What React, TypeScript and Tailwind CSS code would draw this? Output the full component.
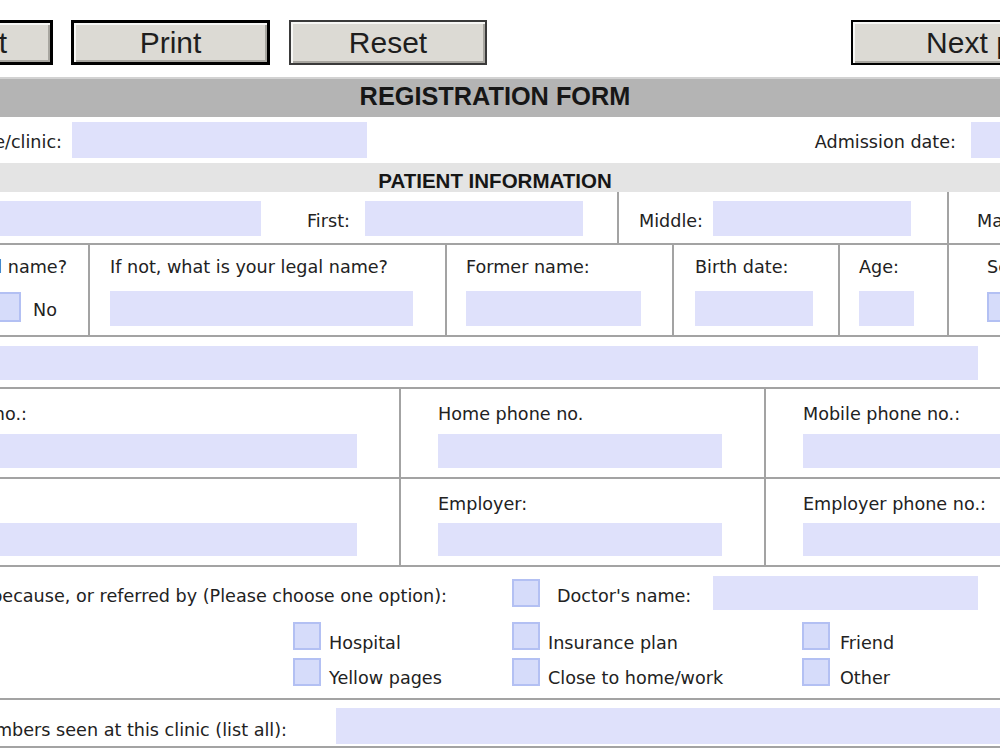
import type { ReactNode } from "react";

const line = "border-[#a3a3a3]";

function Field({ className = "" }: { className?: string }) {
    return <div className={`bg-[#dfe1fb] shrink-0 ${className}`} />;
}

function Box({ className = "" }: { className?: string }) {
    return <div className={`w-[28px] h-[28px] shrink-0 bg-[#d6dcfa] border-2 border-[#b3c0f3] ${className}`} />;
}

// label whose start is cut off by the left edge of the view
function Tail({ w, children, className = "" }: { w: string; children: ReactNode; className?: string }) {
    return <div className={`flex justify-end whitespace-nowrap shrink-0 ${w} ${className}`}>{children}</div>;
}

function Btn({ children, className = "" }: { children: ReactNode; className?: string }) {
    return (
        <button className={`h-[45px] shrink-0 bg-[#dcdad4] shadow-[inset_2px_2px_0_#f7f7f5,inset_-2px_-2px_0_#a8a6a0] text-[30px] leading-none text-[#1e1e1e] font-['Liberation_Sans',sans-serif] ${className}`}>
            {children}
        </button>
    );
}

export default function App() {
    return (
        <div className="w-[1000px] h-[750px] overflow-hidden bg-white text-[#222] font-['DejaVu_Sans',sans-serif] text-[17.6px] leading-[22px]">
            {/* action buttons */}
            <div className="flex pt-[20px] h-[77px]">
                <div className="flex justify-end w-[53px] shrink-0">
                    <Btn className="w-[199px] pl-[14px] border-[3px] border-black">Submit</Btn>
                </div>
                <Btn className="ml-[18px] w-[199px] border-[3px] border-black">Print</Btn>
                <Btn className="ml-[19px] w-[198px] border-2 border-[#3a3a3a]">Reset</Btn>
                <Btn className="ml-[364px] w-[287px] border-2 border-black">Next page</Btn>
            </div>

            <div className="h-[40px] bg-[#b4b4b4] border-t-2 border-[#d2d2d2] flex items-center pb-[5px]">
                <div className="w-[990px] text-center font-['Liberation_Sans',sans-serif] font-bold text-[25.3px] leading-[28px] text-[#161616]">REGISTRATION FORM</div>
            </div>

            <div className="h-[46px] flex items-center">
                <Tail w="w-[62px]" className="mt-[4px]">Name of practice/clinic:</Tail>
                <Field className="ml-[10px] w-[295px] h-[36px]" />
                <Tail w="w-[589px]" className="mt-[4px]">Admission date:</Tail>
                <Field className="ml-[15px] w-[60px] h-[36px]" />
            </div>

            <div className="h-[29px] bg-[#e4e4e4] flex items-end">
                <div className="w-[990px] text-center font-['Liberation_Sans',sans-serif] font-bold text-[20.5px] leading-[22px] text-[#161616]">PATIENT INFORMATION</div>
            </div>

            {/* name */}
            <div className={`flex h-[53px] border-b-2 ${line}`}>
                <div className={`w-[619px] shrink-0 border-r-2 ${line} flex items-center`}>
                    <Field className="w-[261px] h-[35px] mt-[2px]" />
                    <div className="ml-[46px] w-[58px] shrink-0 mt-[6px]">First:</div>
                    <Field className="w-[218px] h-[35px] mt-[2px]" />
                </div>
                <div className={`w-[330px] shrink-0 border-r-2 ${line} flex items-center pl-[20px]`}>
                    <div className="w-[74px] shrink-0 mt-[6px]">Middle:</div>
                    <Field className="w-[198px] h-[35px] mt-[2px]" />
                </div>
                <div className="flex items-center pl-[28px] whitespace-nowrap mt-[6px]">Maiden:</div>
            </div>

            <div className={`flex h-[92px] border-b-2 ${line}`}>
                <div className={`w-[90px] shrink-0 border-r-2 ${line} pt-[11px]`}>
                    <Tail w="w-[67px]">Is this your legal name?</Tail>
                    <div className="flex justify-end items-center w-[57px] mt-[14px] whitespace-nowrap">
                        <Box className="h-[30px] w-[30px]" />
                        <span className="ml-[12px] mr-[16px] mt-[5px]">Yes</span>
                        <Box className="h-[30px] w-[30px]" />
                        <span className="ml-[12px] mt-[5px]">No</span>
                    </div>
                </div>
                <div className={`w-[357px] shrink-0 border-r-2 ${line} pl-[20px] pt-[11px]`}>
                    <div className="whitespace-nowrap">If not, what is your legal name?</div>
                    <Field className="mt-[13px] w-[303px] h-[35px]" />
                </div>
                <div className={`w-[227px] shrink-0 border-r-2 ${line} pl-[19px] pt-[11px]`}>
                    <div>Former name:</div>
                    <Field className="mt-[13px] w-[175px] h-[35px]" />
                </div>
                <div className={`w-[166px] shrink-0 border-r-2 ${line} pl-[21px] pt-[11px]`}>
                    <div>Birth date:</div>
                    <Field className="mt-[13px] w-[118px] h-[35px]" />
                </div>
                <div className={`w-[109px] shrink-0 border-r-2 ${line} pl-[19px] pt-[11px]`}>
                    <div>Age:</div>
                    <Field className="mt-[13px] w-[55px] h-[35px]" />
                </div>
                <div className="pl-[38px] pt-[11px]">
                    <div>Sex:</div>
                    <Box className="mt-[14px] h-[30px] w-[30px]" />
                </div>
            </div>

            <div className={`h-[52px] pt-[9px] border-b-2 ${line}`}>
                <Field className="w-[978px] h-[34px]" />
            </div>

            {/* phones */}
            <div className={`flex h-[90px] border-b-2 ${line}`}>
                <div className={`w-[401px] shrink-0 border-r-2 ${line} pt-[14px]`}>
                    <Tail w="w-[27px]">Work phone no.:</Tail>
                    <Field className="mt-[9px] w-[357px] h-[34px]" />
                </div>
                <div className={`w-[365px] shrink-0 border-r-2 ${line} pl-[37px] pt-[14px]`}>
                    <div className="whitespace-nowrap">Home phone no.</div>
                    <Field className="mt-[9px] w-[284px] h-[34px]" />
                </div>
                <div className="pl-[37px] pt-[14px]">
                    <div className="whitespace-nowrap">Mobile phone no.:</div>
                    <Field className="mt-[9px] w-[220px] h-[34px]" />
                </div>
            </div>

            <div className={`flex h-[88px] border-b-2 ${line}`}>
                <div className={`w-[401px] shrink-0 border-r-2 ${line} pt-[14px]`}>
                    <div className="h-[22px]" />
                    <Field className="mt-[8px] w-[357px] h-[33px]" />
                </div>
                <div className={`w-[365px] shrink-0 border-r-2 ${line} pl-[37px] pt-[14px]`}>
                    <div>Employer:</div>
                    <Field className="mt-[8px] w-[284px] h-[33px]" />
                </div>
                <div className="pl-[37px] pt-[14px]">
                    <div className="whitespace-nowrap">Employer phone no.:</div>
                    <Field className="mt-[8px] w-[220px] h-[33px]" />
                </div>
            </div>

            {/* referral */}
            <div className={`h-[133px] border-b-2 ${line} pt-[9px]`}>
                <div className="flex items-center h-[34px]">
                    <Tail w="w-[447px]" className="mt-[6px]">I chose this clinic because, or referred by (Please choose one option):</Tail>
                    <Box className="ml-[65px]" />
                    <div className="w-[173px] shrink-0 pl-[17px] mt-[6px]">Doctor's name:</div>
                    <Field className="w-[265px] h-[34px]" />
                </div>
                <div className="flex items-center h-[28px] mt-[12px]">
                    <Box className="ml-[293px]" />
                    <div className="w-[191px] shrink-0 pl-[8px] mt-[13px]">Hospital</div>
                    <Box />
                    <div className="w-[262px] shrink-0 pl-[8px] mt-[13px]">Insurance plan</div>
                    <Box />
                    <div className="pl-[10px] mt-[13px]">Friend</div>
                </div>
                <div className="flex items-center h-[28px] mt-[8px]">
                    <Box className="ml-[293px]" />
                    <div className="w-[191px] shrink-0 pl-[8px] mt-[12px]">Yellow pages</div>
                    <Box />
                    <div className="w-[262px] shrink-0 pl-[8px] mt-[12px]">Close to home/work</div>
                    <Box />
                    <div className="pl-[10px] mt-[12px]">Other</div>
                </div>
            </div>

            <div className={`flex items-start pt-[8px] h-[48px] border-b-2 ${line}`}>
                <Tail w="w-[287px]" className="mt-[11px]">Names of family members seen at this clinic (list all):</Tail>
                <Field className="ml-[49px] w-[700px] h-[36px]" />
            </div>
        </div>
    );
}
